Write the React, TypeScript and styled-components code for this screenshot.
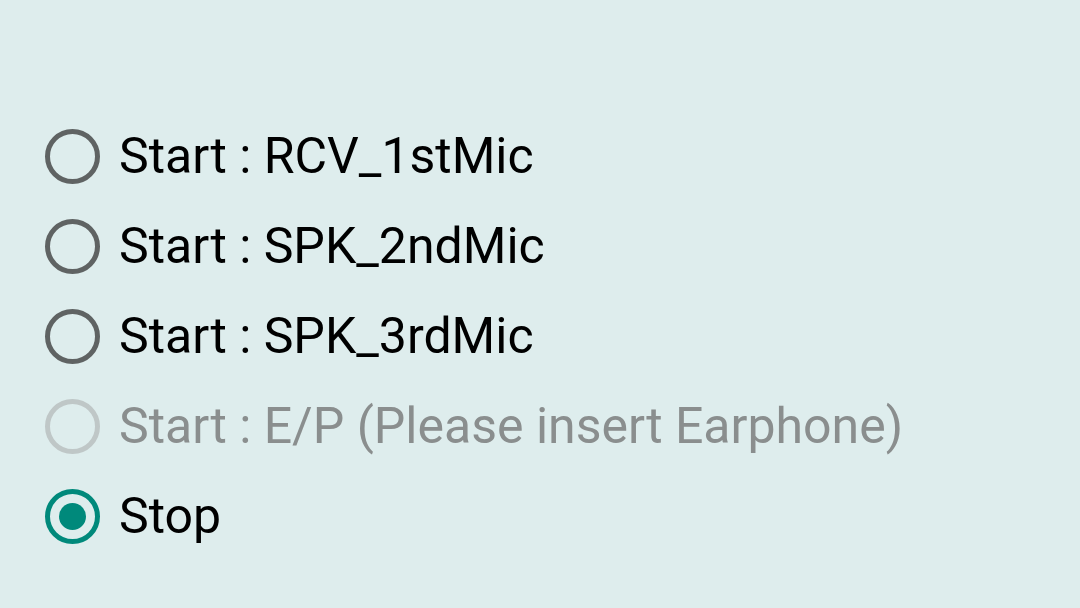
import React, {useState} from 'react';
import styled, {createGlobalStyle, css} from 'styled-components';

const GlobalStyle = createGlobalStyle`
    html, body {
        margin:0;
        padding:0;
        width:1080px;
        height:608px;
        overflow:hidden;
        background:#deeded;
        font-family:Roboto, "Noto Sans", sans-serif;
    }
`;

const Page = styled.div`
    width:1080px;
    height:608px;
    box-sizing:border-box;
    padding-top:111px;
    padding-left:45px;
    display:flex;
    flex-direction:column;
`;

const Row = styled.label<{disabled?:boolean}>`
    display:flex;
    align-items:center;
    height:90px;
    gap:19px;
    font-size:50px;
    color:#000;
    cursor:pointer;
    ${props => props.disabled && css`
        color:#8a8e8e;
        cursor:default;
    `}
`;

const Circle = styled.span<{checked?:boolean, disabled?:boolean}>`
    width:55px;
    height:55px;
    box-sizing:border-box;
    border-radius:50%;
    border:5px solid #5f6363;
    display:flex;
    align-items:center;
    justify-content:center;
    flex-shrink:0;
    ${props => props.disabled && css`
        border-color:#bfc7c7;
    `}
    ${props => props.checked && css`
        border-color:#00897b;
        &::after{
            content:'';
            width:27px;
            height:27px;
            border-radius:50%;
            background:#00897b;
        }
    `}
`;

const options = [
    {id:'rcv', label:'Start : RCV_1stMic'},
    {id:'spk2', label:'Start : SPK_2ndMic'},
    {id:'spk3', label:'Start : SPK_3rdMic'},
    {id:'ep', label:'Start : E/P (Please insert Earphone)', disabled:true},
    {id:'stop', label:'Stop'},
];

const App = () => {
    const [selected, setSelected] = useState('stop');

    return(
        <>
            <GlobalStyle/>
            <Page>
                {options.map(o => (
                    <Row key={o.id} disabled={o.disabled} onClick={() => !o.disabled && setSelected(o.id)}>
                        <Circle checked={selected===o.id} disabled={o.disabled}/>
                        {o.label}
                    </Row>
                ))}
            </Page>
        </>
    )
}

export default App;
